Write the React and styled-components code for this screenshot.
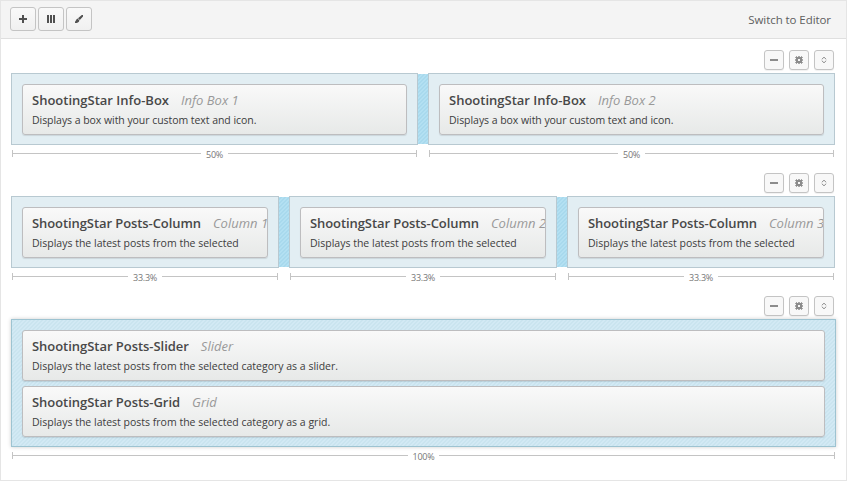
import React from "react";
import styled, { createGlobalStyle, css } from "styled-components";

const GlobalStyle = createGlobalStyle`
  * { box-sizing: border-box; }
  body {
    margin: 0;
    background: #fff;
    color: #444;
    font-family: "Open Sans", "Noto Sans", sans-serif;
  }
`;

const Panel = styled.main`
  width: 847px;
  height: 481px;
  border: 1px solid #e5e5e5;
  background: #fff;
  overflow: hidden;
`;

const Toolbar = styled.header`
  display: flex;
  align-items: center;
  justify-content: space-between;
  height: 38px;
  padding: 0 15px 0 9px;
  border-bottom: 1px solid #dfdfdf;
  background: #f4f4f4;
`;

const ToolGroup = styled.div`
  display: flex;
  gap: 2px;
  margin-bottom: 1px;
`;

const buttonBase = css`
  display: flex;
  align-items: center;
  justify-content: center;
  padding: 0;
  border: 1px solid #c4c4c4;
  border-radius: 3px;
`;

const ToolButton = styled.button`
  ${buttonBase}
  width: 26px;
  height: 24px;
  color: #505050;
  background: linear-gradient(#f9f9f9, #f0f0f0);
`;

const SwitchLink = styled.a`
  font-size: 11.5px;
  line-height: 18px;
  letter-spacing: -0.07px;
  color: #5e5e5e;
`;

const Rows = styled.div`
  display: flex;
  flex-direction: column;
  gap: 13px;
  padding: 11px 10px 0;
`;

const Row = styled.section`
  display: flex;
  flex-direction: column;
`;

const Actions = styled.div`
  display: flex;
  justify-content: flex-end;
  gap: 5px;
  margin: 0 2px 3px 0;
`;

const ActionButton = styled.button`
  ${buttonBase}
  width: 20px;
  height: 20px;
  color: #8c8c8c;
  background: #f8f8f8;
  box-shadow: 0 1px 1px rgba(0, 0, 0, 0.06);
`;

const Cells = styled.div`
  display: flex;
  width: ${(p) => (p.$active ? 825 : 824)}px;
`;

const Cell = styled.div`
  flex: 1 1 0;
  min-width: 0;
  display: flex;
  flex-direction: column;
  gap: 5px;
  padding: 10px 10px 9px;
  border: 1px solid ${(p) => (p.$active ? "#9dc3d1" : "#b8c9d1")};
  background: ${(p) =>
    p.$active
      ? "repeating-linear-gradient(135deg, #d2e9f4 0 1.414px, #cae4ef 1.414px 2.828px)"
      : "#e2eef3"};
  box-shadow: ${(p) => (p.$active ? "0 0 4px rgba(0, 0, 0, 0.2)" : "none")};
`;

const Divider = styled.div`
  flex: 0 0 10px;
  margin: 1px 0;
  background: repeating-linear-gradient(135deg, #b3e0f2 0 1.414px, #a8d9ed 1.414px 2.828px);
`;

const WidgetCard = styled.article`
  height: 51px;
  padding: 6px 0 0 9px;
  border: 1px solid #bdbdbf;
  border-radius: 3px;
  background: linear-gradient(#f9f9f9, #e7e9e8);
  box-shadow: 0 1px 1px rgba(0, 0, 0, 0.1);
  overflow: hidden;
`;

const Heading = styled.div`
  display: flex;
  gap: 12px;
  font-size: 13px;
  line-height: 18px;
  white-space: nowrap;
`;

const Title = styled.h4`
  margin: 0;
  font-size: inherit;
  font-weight: 600;
  letter-spacing: ${(p) => p.$tracking}px;
  color: #484848;
`;

const Subtitle = styled.span`
  font-style: italic;
  font-weight: 400;
  color: #999;
`;

const Description = styled.p`
  margin: 3px 0 0;
  font-size: 10.5px;
  line-height: 16px;
  letter-spacing: ${(p) => p.$tracking}px;
  color: #3c3c3c;
  white-space: nowrap;
`;

const Rulers = styled.div`
  display: flex;
  gap: 12px;
  width: ${(p) => (p.$active ? 823 : 822)}px;
  margin: 3px 0 0 1px;
`;

const Ruler = styled.div`
  flex: 1 1 0;
  display: flex;
  align-items: center;
  height: 12px;
`;

const RulerArm = styled.i`
  flex: 1;
  height: 7px;
  margin-bottom: 1px;
  border: solid #c4c4c4;
  border-width: ${(p) => (p.$end ? "0 1px 0 0" : "0 0 0 1px")};
  background: linear-gradient(#c4c4c4, #c4c4c4) 0 3px / 100% 1px no-repeat;
`;

const RulerLabel = styled.span`
  padding: 1px 5px 0;
  font-size: 9px;
  line-height: 12px;
  letter-spacing: -0.25px;
  color: #777;
`;

const PlusIcon = () => (
  <svg width="8" height="8" viewBox="0 0 8 8" fill="currentColor">
    <path d="M3 0h2v3h3v2H5v3H3V5H0V3h3z" />
  </svg>
);

const ColumnsIcon = () => (
  <svg width="8" height="8" viewBox="0 0 8 8" fill="currentColor">
    <path d="M0 0h2v8H0zM3 0h2v8H3zM6 0h2v8H6z" />
  </svg>
);

const BrushIcon = () => (
  <svg width="8" height="8" viewBox="0 0 8 8" fill="currentColor">
    <path d="M6.800 0H8v1.500L4.800 5 3 3.200zM2.600 3.600 4.400 5.400C4 7.200 2.400 8 0 8V6.800c1-.4.8-2.600 2.600-3.200z" />
  </svg>
);

const MinusIcon = () => (
  <svg width="8" height="8" viewBox="0 0 8 8" fill="currentColor">
    <path d="M0 3h8v2H0z" />
  </svg>
);

const GearIcon = () => (
  <svg width="8" height="8" viewBox="0 0 8 8" fill="currentColor">
    <path fillRule="evenodd" d="M1 1h6v6H1zM3 3v2h2V3z" />
    <path
      opacity=".75"
      d="M1 0h1v1H1zM3 0h2v1H3zM6 0h1v1H6zM1 7h1v1H1zM3 7h2v1H3zM6 7h1v1H6zM0 1h1v1H0zM0 3h1v2H0zM0 6h1v1H0zM7 1h1v1H7zM7 3h1v2H7zM7 6h1v1H7z"
    />
  </svg>
);

const SortIcon = () => (
  <svg width="6" height="8" viewBox="0 0 6 8" fill="none" stroke="currentColor">
    <path d="M.8 3.300 3 1.200l2.200 2.100M.8 4.700 3 6.800l2.200-2.100" />
  </svg>
);

const rows = [
  {
    share: "50%",
    cells: [1, 2].map((n) => [
      {
        title: "ShootingStar Info-Box",
        name: `Info Box ${n}`,
        text: "Displays a box with your custom text and icon.",
        textTracking: -0.05,
      },
    ]),
  },
  {
    share: "33.3%",
    cells: [1, 2, 3].map((n) => [
      {
        title: "ShootingStar Posts-Column",
        name: `Column ${n}`,
        text: "Displays the latest posts from the selected",
        titleTracking: -0.08,
      },
    ]),
  },
  {
    share: "100%",
    active: true,
    cells: [
      [
        {
          title: "ShootingStar Posts-Slider",
          name: "Slider",
          text: "Displays the latest posts from the selected category as a slider.",
          titleTracking: -0.04,
        },
        {
          title: "ShootingStar Posts-Grid",
          name: "Grid",
          text: "Displays the latest posts from the selected category as a grid.",
          titleTracking: -0.04,
        },
      ],
    ],
  },
];

const Widget = ({ title, name, text, titleTracking = 0, textTracking = 0 }) => (
  <WidgetCard>
    <Heading>
      <Title $tracking={titleTracking}>{title}</Title>
      <Subtitle>{name}</Subtitle>
    </Heading>
    <Description $tracking={textTracking}>{text}</Description>
  </WidgetCard>
);

const LayoutRow = ({ share, active, cells }) => (
  <Row>
    <Actions>
      <ActionButton aria-label="Remove row"><MinusIcon /></ActionButton>
      <ActionButton aria-label="Edit row"><GearIcon /></ActionButton>
      <ActionButton aria-label="Move row"><SortIcon /></ActionButton>
    </Actions>
    <Cells $active={active}>
      {cells.map((widgets, i) => (
        <React.Fragment key={i}>
          {i > 0 && <Divider />}
          <Cell $active={active}>
            {widgets.map((w) => <Widget key={w.title} {...w} />)}
          </Cell>
        </React.Fragment>
      ))}
    </Cells>
    <Rulers $active={active}>
      {cells.map((_, i) => (
        <Ruler key={i}>
          <RulerArm />
          <RulerLabel>{share}</RulerLabel>
          <RulerArm $end />
        </Ruler>
      ))}
    </Rulers>
  </Row>
);

export default function App() {
  return (
    <>
      <GlobalStyle />
      <Panel>
        <Toolbar>
          <ToolGroup>
            <ToolButton aria-label="Add widget"><PlusIcon /></ToolButton>
            <ToolButton aria-label="Add row"><ColumnsIcon /></ToolButton>
            <ToolButton aria-label="Prebuilt layouts"><BrushIcon /></ToolButton>
          </ToolGroup>
          <SwitchLink>Switch to Editor</SwitchLink>
        </Toolbar>
        <Rows>
          {rows.map((row) => <LayoutRow key={row.share} {...row} />)}
        </Rows>
      </Panel>
    </>
  );
}
